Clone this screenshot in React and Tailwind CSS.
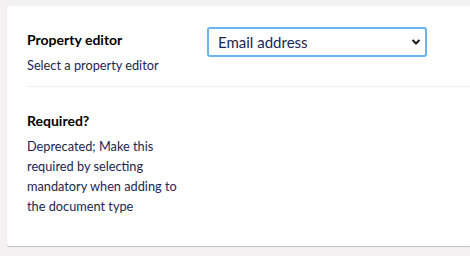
import React from 'react'

const Row = ({ label, description, children, className }) => (
    <div className={`flex ${className}`}>
        <div className="w-[180px] shrink-0 pr-[20px]">
            <div className="text-[14px] leading-[20px] font-bold text-[#000]">{label}</div>
            <div className="mt-[5px] text-[12.75px] leading-[20px] text-[#1b264f]">{description}</div>
        </div>
        <div className="flex-1">{children}</div>
    </div>
)

export default function App() {
    return (
        <div className="min-h-screen bg-[#f3f1f1] pt-[6px] pl-[7px] font-['Lato',sans-serif]">
            <div className="h-[240px] bg-white rounded-l-[3px] shadow-[0_1px_1px_rgba(0,0,0,0.2)] pl-[20px]">
                <Row label="Property editor" description="Select a property editor" className="pt-[24px] pb-[11px] border-b border-[#f0f0f0]">
                    <div className="relative w-[220px] -mt-[3px]">
                        <select
                            defaultValue="email"
                            className="w-full h-[30px] appearance-none rounded-[3px] border-2 border-[#6ab4f0] bg-white pl-[9px] pr-[24px] text-[15px] text-[#1b264f] outline-none"
                        >
                            <option value="email">Email address</option>
                        </select>
                        <svg className="pointer-events-none absolute right-[6px] top-[11px]" width="10" height="8" viewBox="0 0 10 8">
                            <path d="M1.5 2 L5 5.5 L8.5 2" fill="none" stroke="#1b1b1b" strokeWidth="2" />
                        </svg>
                    </div>
                </Row>
                <Row label="Required?" description="Deprecated; Make this required by selecting mandatory when adding to the document type" className="pt-[24px]" />
            </div>
        </div>
    )
}
